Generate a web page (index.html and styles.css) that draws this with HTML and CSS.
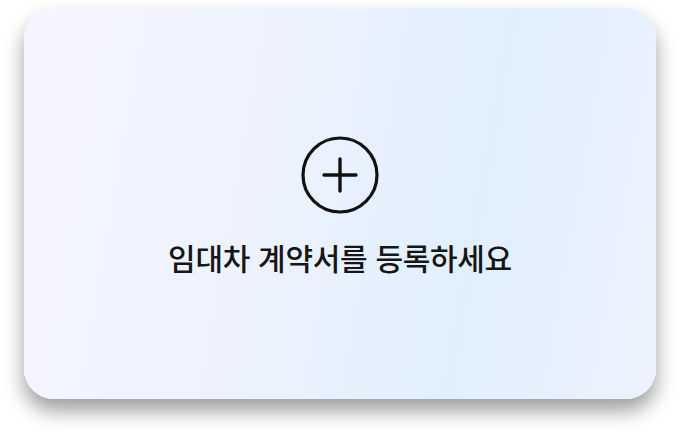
FILE: index.html
```html
<!DOCTYPE html>
<html lang="ko">
<head>
  <meta charset="UTF-8">
  <title>임대차 계약서 등록</title>
  <link rel="stylesheet" href="styles.css">
</head>
<body>
  <div class="card">
    <svg class="add-icon" width="80" height="80" viewBox="0 0 80 80" aria-hidden="true">
      <circle cx="40" cy="40" r="37" fill="none" stroke="#111" stroke-width="3.2"/>
      <path d="M40 24v32M24 40h32" stroke="#111" stroke-width="3.4" stroke-linecap="round"/>
    </svg>
    <p class="card-label">임대차 계약서를 등록하세요</p>
  </div>
</body>
</html>
```

FILE: styles.css
```css
html, body {
  height: 100%;
}

body {
  margin: 0;
  padding: 8px 24px 0;
  box-sizing: border-box;
  background: #fff;
  font-family: "Noto Sans CJK KR", "Noto Sans", sans-serif;
}

.card {
  height: 391px;
  border-radius: 30px;
  background: linear-gradient(100deg, #f6f5ff 0%, #ecf2fe 40%, #e1effd 70%, #edf2fe 100%);
  box-shadow: 0 12px 20px rgba(0, 0, 0, 0.38);
  display: flex;
  flex-direction: column;
  align-items: center;
  padding-top: 127px;
  box-sizing: border-box;
}

.add-icon {
  display: block;
}

.card-label {
  margin: 20px 0 0;
  font-size: 30px;
  font-weight: 500;
  color: #161616;
  letter-spacing: -0.3px;
}
```
